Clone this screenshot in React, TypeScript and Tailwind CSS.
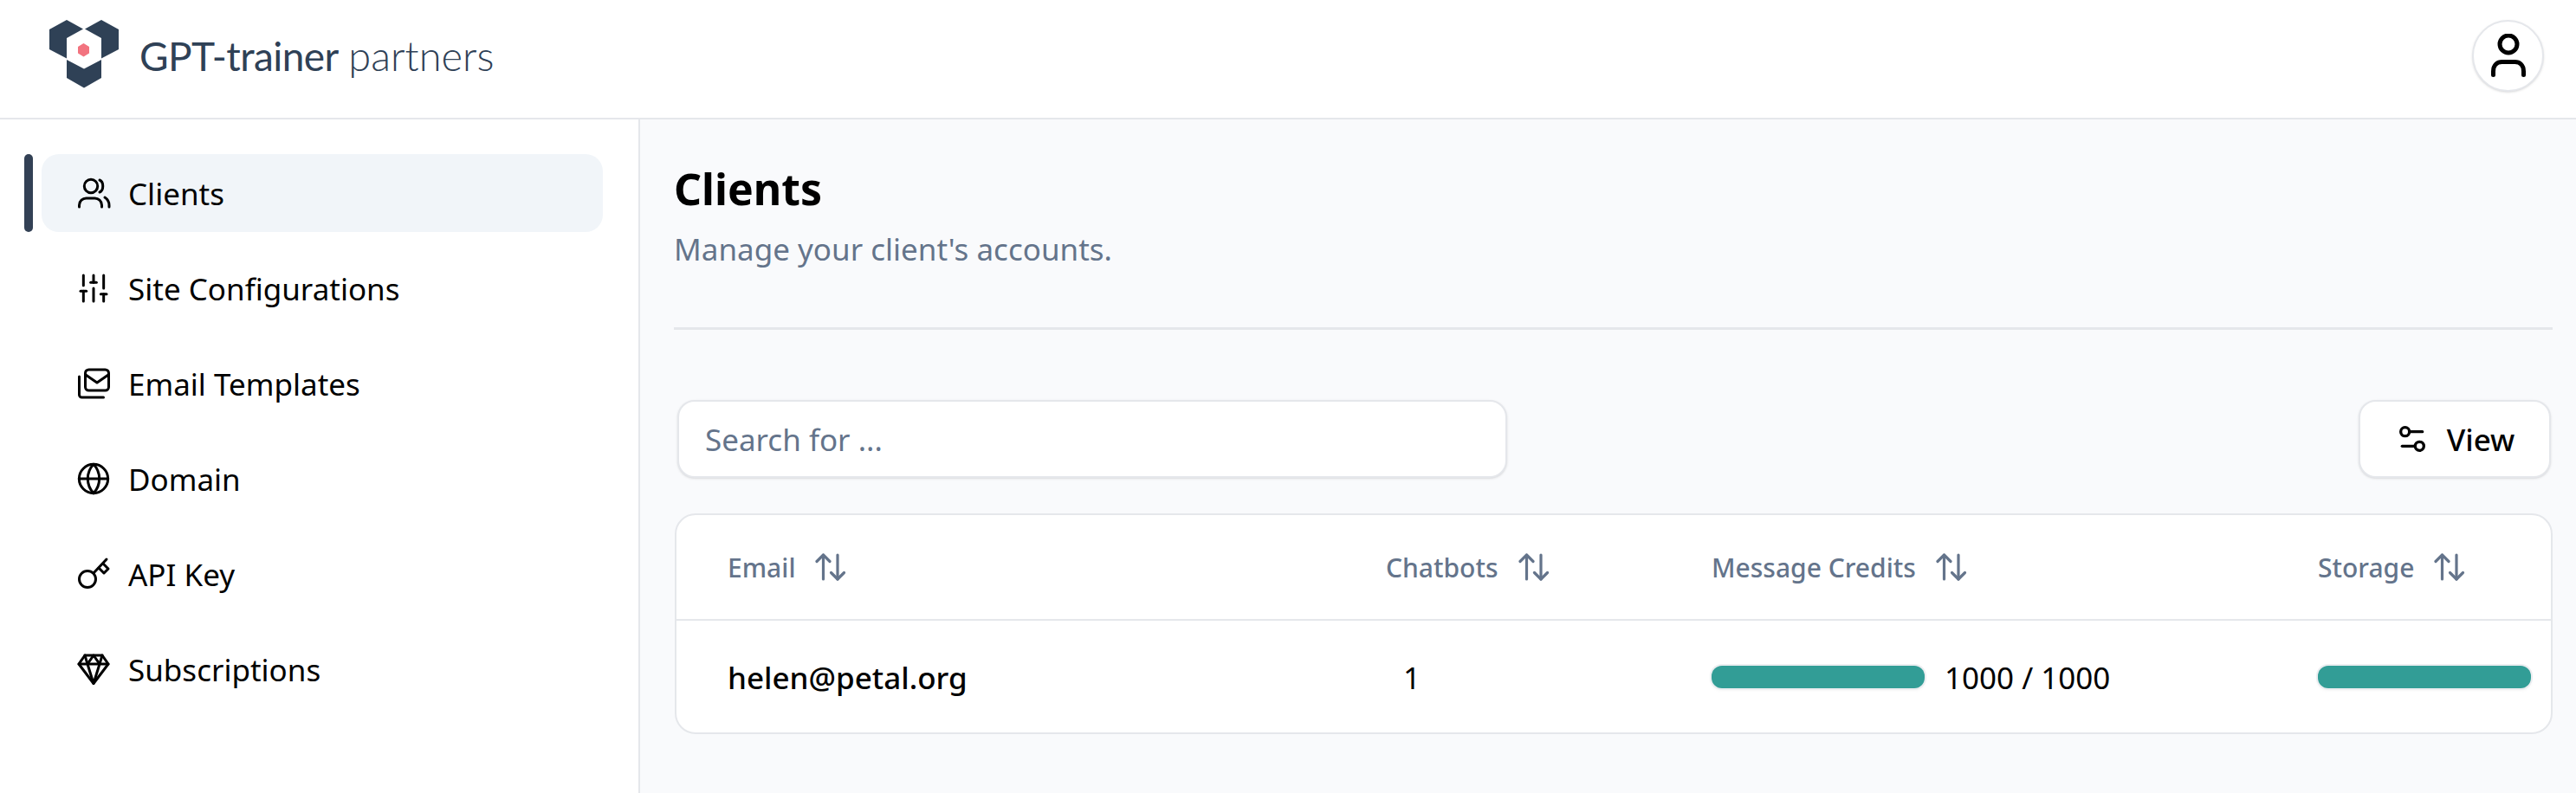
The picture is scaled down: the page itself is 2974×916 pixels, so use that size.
import React from 'react';
import { Globe, Settings2, SlidersVertical } from 'lucide-react';

const Logo = () => (
    <svg width="82" height="82" viewBox="0 0 82 82" className="shrink-0">
        <g fill="#2f4156">
            <polygon points="20,0 39,10.5 20,21 20,44.5 0,34 0,11" />
            <polygon points="60,0 80,11 80,34 60,44.5 60,21 41,10.5" />
            <polygon points="20,46 40,56.5 60,46 60,67 40,78.5 20,67" />
        </g>
        <polygon points="39.5,27 46,31 46,38.5 39.5,42.5 33,38.5 33,31" fill="#f2737f" />
    </svg>
);

const UsersIcon = () => (
    <svg width="40" height="40" viewBox="0 0 40 40" fill="none" stroke="currentColor" strokeWidth="3" strokeLinecap="round" strokeLinejoin="round">
        <circle cx="17" cy="12" r="7.7" />
        <path d="M27 5c5 2 5 12 0 14" />
        <path d="M3.5 36v-2c0-5 4-8 8-8h10c4 0 8 3 8 8v2" />
        <path d="M33 25c3 2 5 5 5 9v2" />
    </svg>
);

const MailStackIcon = () => (
    <svg width="40" height="40" viewBox="0 0 40 40" fill="none" stroke="currentColor" strokeWidth="3" strokeLinecap="round" strokeLinejoin="round">
        <rect x="10.5" y="4" width="27" height="24" rx="4" />
        <path d="M11 10l13 9 13-9" />
        <path d="M3.5 12v21a3 3 0 0 0 3 3h25" />
    </svg>
);

const KeyIcon = () => (
    <svg width="40" height="40" viewBox="0 0 40 40" fill="none" stroke="currentColor" strokeWidth="3" strokeLinecap="round" strokeLinejoin="round">
        <circle cx="13" cy="26" r="9.5" />
        <path d="M20 19L35 3" />
        <path d="M26 13l6 6 5-5-6-6" />
    </svg>
);

const GemIcon = () => (
    <svg width="40" height="40" viewBox="0 0 40 40" fill="none" stroke="currentColor" strokeWidth="3" strokeLinecap="round" strokeLinejoin="round">
        <path d="M10 4h20l7 10-17 22.5L3 14z" />
        <path d="M3 14h34" />
        <path d="M10 4l3 10 7 22.5 7-22.5 3-10" />
        <path d="M13 14l7-10 7 10" />
    </svg>
);

// arrows sit side by side, same height
const SortIcon = () => (
    <svg width="36" height="34" viewBox="0 0 36 34" fill="none" stroke="#64748b" strokeWidth="3.2" strokeLinecap="round" strokeLinejoin="round" className="shrink-0">
        <path d="M9.5 31V3" />
        <path d="M2 10.5L9.5 3 17 10.5" />
        <path d="M26 3v28" />
        <path d="M18.5 23.5L26 31l7.5-7.5" />
    </svg>
);

const NAV = [
    { label: 'Clients', icon: <UsersIcon />, active: true },
    { label: 'Site Configurations', icon: <SlidersVertical size={40} strokeWidth={1.8} /> },
    { label: 'Email Templates', icon: <MailStackIcon /> },
    { label: 'Domain', icon: <Globe size={40} strokeWidth={1.8} /> },
    { label: 'API Key', icon: <KeyIcon /> },
    { label: 'Subscriptions', icon: <GemIcon /> },
];

const ProgressBar = () => (
    <div className="h-[26px] w-[246px] rounded-[12px] bg-[#329d96] shadow-[0_0_0_2px_#eceef1,0_2px_4px_rgba(0,0,0,0.06)]" />
);

const HeaderCell = ({ label, className = '' }: { label: string; className?: string }) => (
    <div className={`flex items-center gap-[23px] text-[30px] font-medium text-[#64748b] ${className}`}>
        <span>{label}</span>
        <SortIcon />
    </div>
);

export default function App() {
    return (
        <div className="flex h-[916px] flex-col overflow-hidden bg-white text-black [font-family:'Noto_Sans',sans-serif]">
            {/* Top bar */}
            <header className="flex h-[138px] shrink-0 items-center justify-between border-b-2 border-[#e5e7eb] pb-[8px] pl-[57px] pr-[37px]">
                <div className="flex items-center gap-[22px]">
                    <Logo />
                    <div className="text-[46px] leading-none text-[#2f4156] [font-family:'Lato',sans-serif]">
                        <span className="tracking-[-0.6px]">GPT-trainer</span> <span className="text-[47px] font-light">partners</span>
                    </div>
                </div>
                <button type="button" className="flex h-[83px] w-[83px] items-center justify-center rounded-full border-2 border-[#e5e7eb] bg-white shadow-sm">
                    <svg width="40" height="50" viewBox="0 0 40 50" fill="none" stroke="black" strokeWidth="5" strokeLinecap="round" strokeLinejoin="round">
                        <circle cx="20" cy="12" r="10" />
                        <path d="M2.5 47.5v-4c0-8 5-11 10-11h15c5 0 10 3 10 11v4" />
                    </svg>
                </button>
            </header>

            <div className="flex min-h-0 flex-1">
                {/* Sidebar */}
                <aside className="flex w-[739px] shrink-0 flex-col gap-[20px] border-r-2 border-[#e5e7eb] pb-0 pl-[28px] pr-[41px] pt-[40px]">
                    {NAV.map((item) => (
                        <div key={item.label} className="flex h-[90px] gap-[10px]">
                            <div className={`w-[10px] rounded-full ${item.active ? 'bg-[#334155]' : ''}`} />
                            <div className={`flex flex-1 items-center gap-[20px] rounded-[20px] pl-[40px] text-[35px] ${item.active ? 'bg-[#f1f5f9]' : ''}`}>
                                {item.icon}
                                <span className="mt-[3px]">{item.label}</span>
                            </div>
                        </div>
                    ))}
                </aside>

                {/* Main */}
                <main className="min-w-0 flex-1 bg-[#f9fafc] pl-[39px] pr-[27px] pt-[44px]">
                    <h1 className="text-[50px] font-bold leading-[72px]">Clients</h1>
                    <p className="mt-[8px] text-[35px] leading-[52px] text-[#64748b]">Manage your client's accounts.</p>
                    <div className="mt-[64px] h-[3px] bg-[#e5e7eb]" />

                    <div className="mb-[41px] ml-[4px] mt-[81px] flex items-center justify-between pr-[2px]">
                        <div className="flex h-[90px] w-[958px] items-center rounded-[20px] border-2 border-[#e5e7eb] bg-white pl-[30px] pt-[3px] text-[35px] text-[#64748b] shadow-sm">
                            Search for ...
                        </div>
                        <button type="button" className="flex h-[90px] w-[222px] items-center justify-center gap-[20px] rounded-[20px] border-2 border-[#e5e7eb] bg-white text-[35px] font-medium shadow-sm">
                            <Settings2 size={40} strokeWidth={2} />
                            <span className="mt-[3px]">View</span>
                        </button>
                    </div>

                    {/* Table */}
                    <div className="ml-[1px] h-[255px] rounded-[24px] border-2 border-[#e5e7eb] bg-white">
                        <div className="grid h-[122px] grid-cols-[819px_376px_700px_1fr] items-center border-b-2 border-[#e5e7eb]">
                            <HeaderCell label="Email" className="pl-[59px]" />
                            <HeaderCell label="Chatbots" />
                            <HeaderCell label="Message Credits" />
                            <HeaderCell label="Storage" />
                        </div>
                        <div className="grid h-[129px] grid-cols-[819px_376px_700px_1fr] items-center">
                            <div className="mt-[3px] pl-[59px] text-[35px] font-medium">helen@petal.org</div>
                            <div className="mt-[3px] pl-[20px] text-[35px]">1</div>
                            <div className="flex items-center gap-[23px] text-[35px]">
                                <ProgressBar />
                                <span className="mt-[3px]">1000 / 1000</span>
                            </div>
                            <div>
                                <ProgressBar />
                            </div>
                        </div>
                    </div>
                </main>
            </div>
        </div>
    );
}
